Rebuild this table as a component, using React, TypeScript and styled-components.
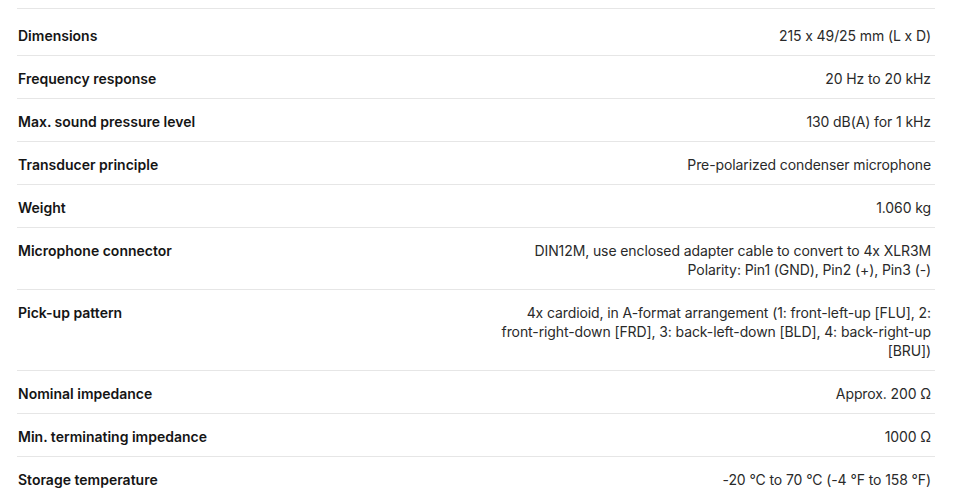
import React from "react";
import styled, { createGlobalStyle } from "styled-components";

type Spec = {
  label: string;
  value: string[];
};

const specs: Spec[] = [
  { label: "Dimensions", value: ["215 x 49/25 mm (L x D)"] },
  { label: "Frequency response", value: ["20 Hz to 20 kHz"] },
  { label: "Max. sound pressure level", value: ["130 dB(A) for 1 kHz"] },
  { label: "Transducer principle", value: ["Pre-polarized condenser microphone"] },
  { label: "Weight", value: ["1.060 kg"] },
  {
    label: "Microphone connector",
    value: [
      "DIN12M, use enclosed adapter cable to convert to 4x XLR3M",
      "Polarity: Pin1 (GND), Pin2 (+), Pin3 (-)",
    ],
  },
  {
    label: "Pick-up pattern",
    value: [
      "4x cardioid, in A-format arrangement (1: front-left-up [FLU], 2: front-right-down [FRD], 3: back-left-down [BLD], 4: back-right-up [BRU])",
    ],
  },
  { label: "Nominal impedance", value: ["Approx. 200 Ω"] },
  { label: "Min. terminating impedance", value: ["1000 Ω"] },
  { label: "Storage temperature", value: ["-20 °C to 70 °C (-4 °F to 158 °F)"] },
];

const GlobalStyle = createGlobalStyle`
  html, body {
    margin: 0;
    padding: 0;
    background: #fff;
    overflow: hidden;
  }
  body {
    font-family: Inter, "Liberation Sans", Arial, sans-serif;
    font-feature-settings: "calt" 0;
    color: #1b1b1b;
  }
`;

const Page = styled.div`
  padding: 8px 37px 0 17px;
`;

const SpecList = styled.dl`
  margin: 0;
  border-top: 1px solid #e6e6e6;
  padding-top: 4px;
`;

const SpecRow = styled.div`
  display: grid;
  grid-template-columns: 1fr 1fr;
  column-gap: 24px;
  padding: 13px 4px 10px 1px;
  border-bottom: 1px solid #e6e6e6;
  font-size: 14px;
  line-height: 19px;
`;

const Label = styled.dt`
  margin: 0;
  font-weight: 600;
  color: #151515;
`;

const Value = styled.dd`
  margin: 0;
  text-align: right;
  color: #2a2a2a;
  letter-spacing: -0.1px;
`;

const App = () => {
  return (
    <>
      <GlobalStyle />
      <Page>
        <SpecList>
          {specs.map((spec) => (
            <SpecRow key={spec.label}>
              <Label>{spec.label}</Label>
              <Value>
                {spec.value.map((line, i) => (
                  <div key={i}>{line}</div>
                ))}
              </Value>
            </SpecRow>
          ))}
        </SpecList>
      </Page>
    </>
  );
};

export default App;
